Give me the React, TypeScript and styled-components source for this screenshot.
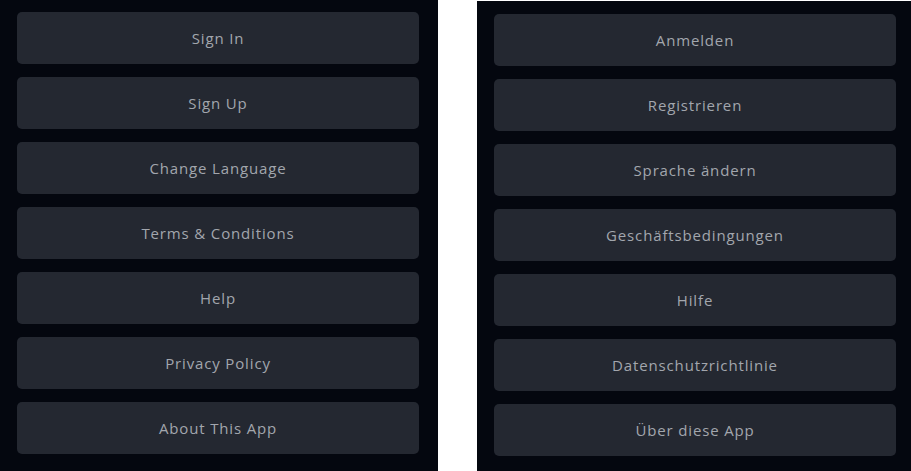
import React from "react";
import styled, { createGlobalStyle } from "styled-components";

const Global = createGlobalStyle`
  html, body { margin: 0; padding: 0; background: #ffffff; overflow: hidden; }
  body { font-family: "Open Sans", "Liberation Sans", sans-serif; }
`;

const Page = styled.div`
  display: flex;
  align-items: flex-start;
  gap: 39px;
  width: 911px;
  height: 471px;
  overflow: hidden;
`;

const Panel = styled.div<{ $offset: number; $width: number; $padTop: number }>`
  flex: none;
  width: ${(p) => p.$width}px;
  margin-top: ${(p) => p.$offset}px;
  box-sizing: border-box;
  background: #04070f;
  padding: ${(p) => p.$padTop}px 0 17px 17px;
  display: flex;
  flex-direction: column;
  gap: 13px;
`;

const MenuButton = styled.button`
  width: 402px;
  height: 52px;
  border: none;
  border-radius: 5px;
  background: #242831;
  color: #a2a6ad;
  font-family: "Open Sans", "Liberation Sans", sans-serif;
  font-size: 15px;
  letter-spacing: 0.85px;
  display: flex;
  align-items: center;
  justify-content: center;
  padding: 0;
  cursor: pointer;
`;

const en = [
  "Sign In",
  "Sign Up",
  "Change Language",
  "Terms & Conditions",
  "Help",
  "Privacy Policy",
  "About This App",
];

const de = [
  "Anmelden",
  "Registrieren",
  "Sprache ändern",
  "Geschäftsbedingungen",
  "Hilfe",
  "Datenschutzrichtlinie",
  "Über diese App",
];

export default function App() {
  return (
    <>
      <Global />
      <Page>
        <Panel $offset={0} $width={438} $padTop={12}>
          {en.map((t) => (
            <MenuButton key={t}>{t}</MenuButton>
          ))}
        </Panel>
        <Panel $offset={1} $width={434} $padTop={13}>
          {de.map((t) => (
            <MenuButton key={t}>{t}</MenuButton>
          ))}
        </Panel>
      </Page>
    </>
  );
}
